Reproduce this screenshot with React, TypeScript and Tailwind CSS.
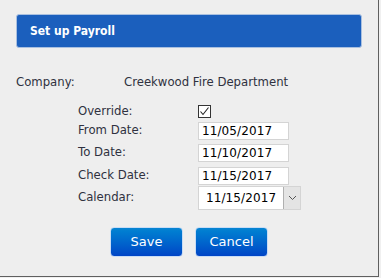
import React from 'react';

const font = { fontFamily: '"DejaVu Sans", Verdana, sans-serif' };

const DateField = ({ value }: { value: string }) => (
  <div className="w-[91px] h-[18px] bg-white border border-[#d4d4d4] flex items-center pl-[3px] text-[12px] text-black tracking-[0.1px]">
    {value}
  </div>
);

const App = () => {
  return (
    <div className="w-[381px] h-[278px] bg-[#f0f0f0]" style={font}>
      <div className="w-[379px] h-[277px] bg-[#eeeeee] border-r border-b border-[#5f5f5f] pt-[14px]">
        {/* Header */}
        <div className="mx-[16px] w-[346px] h-[34px] bg-[#1b5fbd] border border-[#a9c0e0] rounded-[3px] flex items-center pl-[13px]">
          <span
            className="text-white font-bold text-[12px]"
            style={{ fontFamily: '"DejaVu Sans Condensed", "DejaVu Sans", sans-serif' }}
          >
            Set up Payroll
          </span>
        </div>

        {/* Company */}
        <div className="flex items-center mt-[27px] h-[16px] text-[11.7px] text-[#2f3140]">
          <span className="ml-[16px] w-[108px]">Company:</span>
          <span>Creekwood Fire Department</span>
        </div>

        {/* Fields */}
        <div className="mt-[13px] ml-[78px] flex flex-col text-[11.7px] text-[#2f3140]">
          <div className="flex items-center h-[15px]">
            <span className="w-[120px]">Override:</span>
            <div className="w-[13px] h-[13px] bg-white border border-[#333] flex items-center justify-center">
              <svg width="11" height="11" viewBox="0 0 11 11">
                <path d="M1.5 5.5 L4 8.5 L9.5 1.5" fill="none" stroke="#222" strokeWidth="1.1" />
              </svg>
            </div>
          </div>
          <div className="flex items-center mt-[3px] h-[18px]">
            <span className="w-[120px]">From Date:</span>
            <DateField value="11/05/2017" />
          </div>
          <div className="flex items-center mt-[4px] h-[18px]">
            <span className="w-[120px]">To Date:</span>
            <DateField value="11/10/2017" />
          </div>
          <div className="flex items-center mt-[5px] h-[18px]">
            <span className="w-[120px]">Check Date:</span>
            <DateField value="11/15/2017" />
          </div>
          <div className="flex items-center mt-[1px] h-[24px]">
            <span className="w-[120px]">Calendar:</span>
            <div className="w-[103px] h-[24px] bg-white border border-[#d4d4d4] flex items-center">
              <span className="flex-1 pl-[7px] text-[12px] text-black tracking-[0.1px]">11/15/2017</span>
              <div className="w-[17px] h-[22px] bg-[#e4e4e4] border-l border-[#b0b0b0] flex items-center justify-center">
                <svg width="9" height="6" viewBox="0 0 9 6">
                  <path d="M1 1 L4.5 4.5 L8 1" fill="none" stroke="#555" strokeWidth="1" />
                </svg>
              </div>
            </div>
          </div>
        </div>

        {/* Buttons */}
        <div className="flex mt-[17px] ml-[110px] gap-[12px]">
          <button className="w-[73px] h-[30px] rounded-[4px] border border-[#c8dcf5] bg-gradient-to-b from-[#0784d2] to-[#0044c6] text-white text-[13px]">
            Save
          </button>
          <button className="w-[73px] h-[30px] rounded-[4px] border border-[#c8dcf5] bg-gradient-to-b from-[#0784d2] to-[#0044c6] text-white text-[13px]">
            Cancel
          </button>
        </div>
      </div>
    </div>
  );
};

export default App;
